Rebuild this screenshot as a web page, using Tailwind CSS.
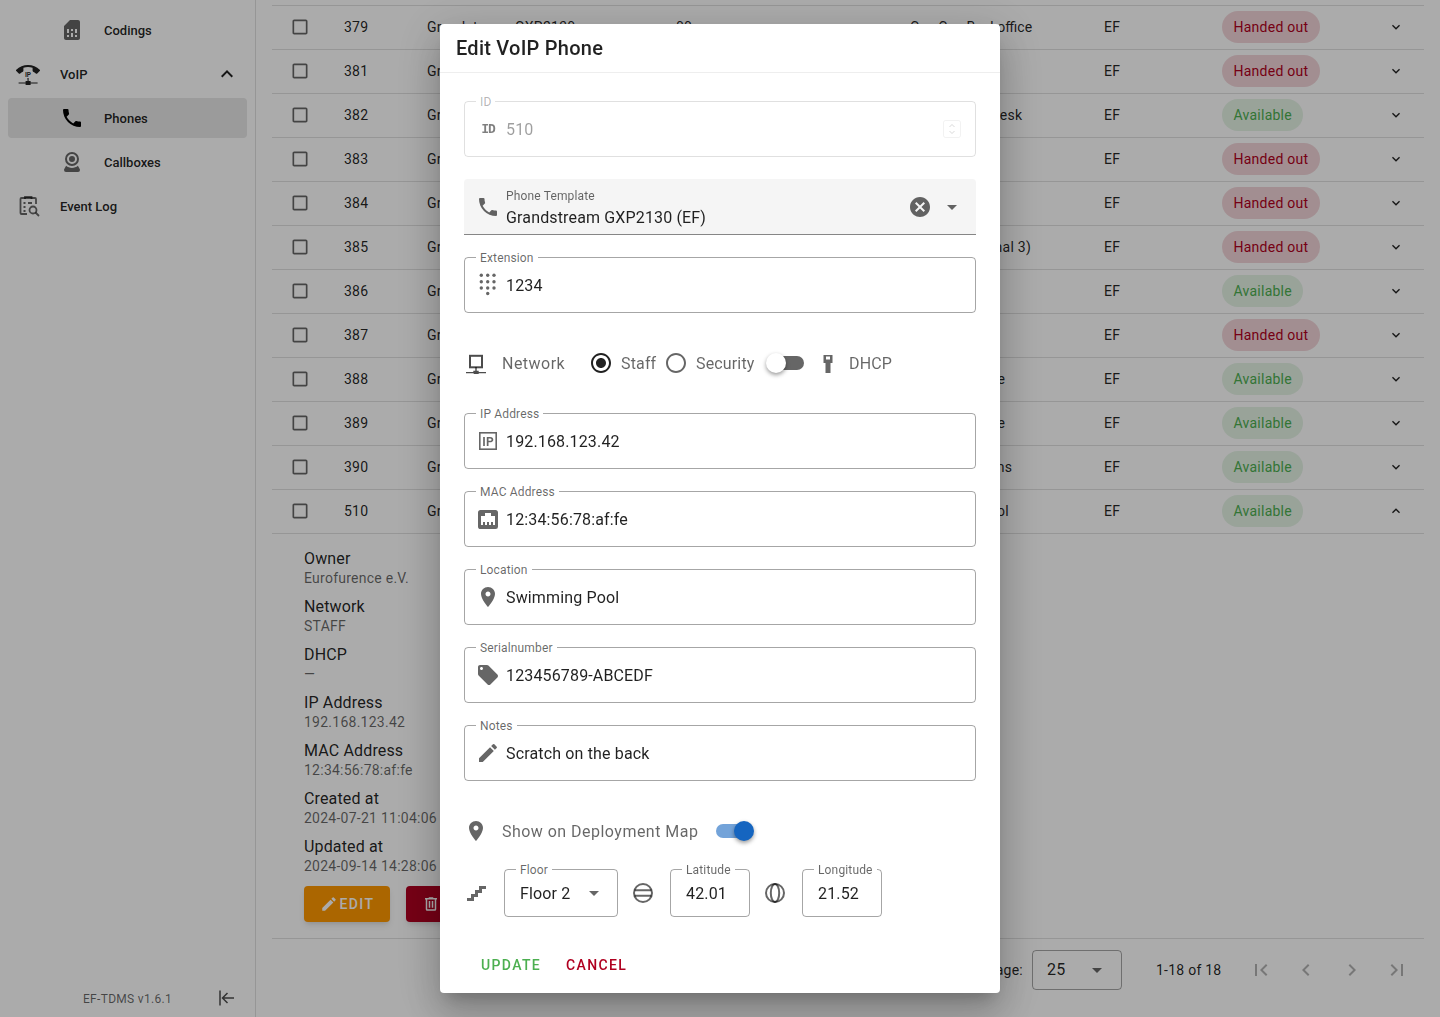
<!DOCTYPE html>
<html lang="en">
<head>
  <meta charset="UTF-8" />
  <title>EF-TDMS - Phones</title>
  <script src="https://cdn.jsdelivr.net/npm/@tailwindcss/browser@4"></script>
</head>
<body class="h-[1017px] overflow-hidden bg-white font-['Roboto',sans-serif] text-black/87">
  <div class="flex h-[1017px]">
    <!-- sidebar -->
    <aside class="w-[256px] shrink-0 border-r border-[#e0e0e0] flex flex-col justify-between text-[13px] font-medium">
      <nav class="pt-2">
        <div class="h-11 flex items-center pl-[60px]">
          <svg class="w-6 h-6 fill-black/60" viewBox="0 0 24 24"><path d="M19.99 4c0-1.1-.89-2-1.99-2h-8L4 8v12c0 1.1.9 2 2 2h12c1.1 0 2-.9 2-2l-.01-16zM9 19H7v-2h2v2zm8 0h-2v-2h2v2zm-8-4H7v-4h2v4zm4 4h-2v-4h2v4zm0-6h-2v-2h2v2zm4 2h-2v-4h2v4z"/></svg>
          <span class="ml-5 pt-[2px]">Codings</span>
        </div>
        <div class="h-11 flex items-center pl-4">
          <svg class="w-6 h-6" viewBox="0 0 24 24"><path class="fill-black/87" transform="translate(0 -4)" d="M12 9c-1.6 0-3.15.25-4.6.72v3.100c0 .39-.23.74-.56.9-.98.49-1.870 1.120-2.660 1.850-.18.18-.43.28-.7.28-.28 0-.53-.11-.71-.29L.29 13.080c-.18-.17-.29-.42-.29-.7 0-.28.11-.53.29-.71C3.340 8.780 7.460 7 12 7s8.660 1.780 11.710 4.670c.18.18.29.43.29.71 0 .28-.11.53-.29.71l-2.480 2.480c-.18.18-.43.29-.71.29-.27 0-.52-.11-.7-.28-.79-.74-1.690-1.360-2.670-1.850-.33-.16-.56-.5-.56-.9v-3.100C15.150 9.250 13.600 9 12 9z"/><text x="12" y="15.300" text-anchor="middle" font-size="6.500" font-weight="700" class="fill-black/87">IP</text><path class="fill-black/87" d="M11.400 16h1.200v3h2v1.500h7v1h-7V23h-5v-1.500h-7v-1h7V19h2z"/></svg>
          <span class="ml-5 flex-1 pt-[2px]">VoIP</span>
          <svg class="w-6 h-6 mr-4 fill-black/87" viewBox="0 0 24 24"><path d="M12 8l-6 6 1.410 1.410L12 10.830l4.590 4.580L18 14z"/></svg>
        </div>
        <div class="h-11 py-0.5 px-2">
          <div class="h-10 bg-[#e7e7e7] rounded-[4px] flex items-center pl-[52px]">
            <svg class="w-6 h-6 fill-black" viewBox="0 0 24 24"><path d="M6.620,10.790C8.060,13.620 10.380,15.940 13.210,17.380L15.410,15.180C15.690,14.900 16.080,14.820 16.430,14.930C17.550,15.300 18.750,15.500 20,15.500A1,1 0 0,1 21,16.500V20A1,1 0 0,1 20,21A17,17 0 0,1 3,4A1,1 0 0,1 4,3H7.500A1,1 0 0,1 8.500,4C8.500,5.250 8.700,6.450 9.070,7.570C9.180,7.920 9.100,8.310 8.820,8.590L6.620,10.790Z"/></svg>
            <span class="ml-5 pt-[2px]">Phones</span>
          </div>
        </div>
        <div class="h-11 flex items-center pl-[60px]">
          <svg class="w-6 h-6 fill-black/60" viewBox="0 0 24 24"><path d="M12,2A7,7 0 0,1 19,9A7,7 0 0,1 12,16A7,7 0 0,1 5,9A7,7 0 0,1 12,2M12,4A5,5 0 0,0 7,9A5,5 0 0,0 12,14A5,5 0 0,0 17,9A5,5 0 0,0 12,4M12,6A3,3 0 0,1 15,9A3,3 0 0,1 12,12A3,3 0 0,1 9,9A3,3 0 0,1 12,6M6,22A2,2 0 0,1 4,20C4,19.620 4.100,19.270 4.290,18.970L6.110,15.810C7.690,17.170 9.750,18 12,18C14.250,18 16.310,17.170 17.890,15.810L19.710,18.970C19.900,19.270 20,19.620 20,20A2,2 0 0,1 18,22H6Z"/></svg>
          <span class="ml-5 pt-[2px]">Callboxes</span>
        </div>
        <div class="h-11 flex items-center pl-[17px]">
          <svg class="w-6 h-6 fill-none stroke-black/60 stroke-[1.800]" viewBox="0 0 24 24"><path d="M10 20H4.500a1 1 0 0 1-1-1V5a1 1 0 0 1 1-1H18a1 1 0 0 1 1 1v5"/><path d="M8 5V3h6.500v2M6.500 9h2M11 9h4M6.500 13h2M6.500 17h2"/><circle cx="16" cy="16" r="3.500"/><path d="M18.500 18.500 22 22"/></svg>
          <span class="ml-[19px] pt-[2px]">Event Log</span>
        </div>
      </nav>
      <div class="h-[38px] flex items-center pl-[83px] text-xs font-normal text-black/60 tracking-[0.3px]">
        <span class="pt-[2px]">EF-TDMS v1.6.1</span>
        <svg class="w-5 h-5 ml-[45px] fill-none stroke-black/70 stroke-[1.500]" viewBox="0 0 20 20"><path d="M3 2.500v15M17 10H5.500M10.500 5l-5 5 5 5"/></svg>
      </div>
    </aside>

    <!-- table -->
    <main class="flex-1 min-w-0 px-4 pt-[5px] text-sm tracking-[0.25px]">
      <div class="border-t border-[#e0e0e0]">
        <div class="grid grid-cols-[72px_83px_88px_161px_234px_194px_118px_1fr] h-11 items-center border-b border-[#e0e0e0] pb-[1px]">
          <svg class="w-5 h-5 ml-[18px] fill-black/60" viewBox="0 0 24 24"><path d="M19 5v14H5V5h14m0-2H5c-1.100 0-2 .9-2 2v14c0 1.100.9 2 2 2h14c1.100 0 2-.9 2-2V5c0-1.100-.9-2-2-2z"/></svg>
          <span>379</span><span>Grandstream</span><span>GXP2130</span><span>00</span><span class="tracking-normal">Con Con Backoffice</span><span>EF</span>
          <div class="flex justify-between items-center pr-5"><span class="h-8 px-[11.500px] rounded-full flex items-center bg-[#b00020]/17 text-[#b00020]">Handed out</span><svg class="w-4 h-4 fill-black/87" viewBox="0 0 24 24"><path d="M16.590 8.590 12 13.170 7.410 8.590 6 10l6 6 6-6z"/></svg></div>
        </div>
        <div class="grid grid-cols-[72px_83px_88px_161px_234px_194px_118px_1fr] h-11 items-center border-b border-[#e0e0e0] pb-[1px]">
          <svg class="w-5 h-5 ml-[18px] fill-black/60" viewBox="0 0 24 24"><path d="M19 5v14H5V5h14m0-2H5c-1.100 0-2 .9-2 2v14c0 1.100.9 2 2 2h14c1.100 0 2-.9 2-2V5c0-1.100-.9-2-2-2z"/></svg>
          <span>381</span><span>Grandstream</span><span>GXP2130</span><span>00</span><span>Office</span><span>EF</span>
          <div class="flex justify-between items-center pr-5"><span class="h-8 px-[11.500px] rounded-full flex items-center bg-[#b00020]/17 text-[#b00020]">Handed out</span><svg class="w-4 h-4 fill-black/87" viewBox="0 0 24 24"><path d="M16.590 8.590 12 13.170 7.410 8.590 6 10l6 6 6-6z"/></svg></div>
        </div>
        <div class="grid grid-cols-[72px_83px_88px_161px_234px_194px_118px_1fr] h-11 items-center border-b border-[#e0e0e0] pb-[1px]">
          <svg class="w-5 h-5 ml-[18px] fill-black/60" viewBox="0 0 24 24"><path d="M19 5v14H5V5h14m0-2H5c-1.100 0-2 .9-2 2v14c0 1.100.9 2 2 2h14c1.100 0 2-.9 2-2V5c0-1.100-.9-2-2-2z"/></svg>
          <span>382</span><span>Grandstream</span><span>GXP2130</span><span>00</span><span>Registration desk</span><span>EF</span>
          <div class="flex justify-between items-center pr-5"><span class="h-8 px-[11.500px] rounded-full flex items-center bg-[#4caf50]/15 text-[#4caf50]">Available</span><svg class="w-4 h-4 fill-black/87" viewBox="0 0 24 24"><path d="M16.590 8.590 12 13.170 7.410 8.590 6 10l6 6 6-6z"/></svg></div>
        </div>
        <div class="grid grid-cols-[72px_83px_88px_161px_234px_194px_118px_1fr] h-11 items-center border-b border-[#e0e0e0] pb-[1px]">
          <svg class="w-5 h-5 ml-[18px] fill-black/60" viewBox="0 0 24 24"><path d="M19 5v14H5V5h14m0-2H5c-1.100 0-2 .9-2 2v14c0 1.100.9 2 2 2h14c1.100 0 2-.9 2-2V5c0-1.100-.9-2-2-2z"/></svg>
          <span>383</span><span>Grandstream</span><span>GXP2130</span><span>00</span><span>Office</span><span>EF</span>
          <div class="flex justify-between items-center pr-5"><span class="h-8 px-[11.500px] rounded-full flex items-center bg-[#b00020]/17 text-[#b00020]">Handed out</span><svg class="w-4 h-4 fill-black/87" viewBox="0 0 24 24"><path d="M16.590 8.590 12 13.170 7.410 8.590 6 10l6 6 6-6z"/></svg></div>
        </div>
        <div class="grid grid-cols-[72px_83px_88px_161px_234px_194px_118px_1fr] h-11 items-center border-b border-[#e0e0e0] pb-[1px]">
          <svg class="w-5 h-5 ml-[18px] fill-black/60" viewBox="0 0 24 24"><path d="M19 5v14H5V5h14m0-2H5c-1.100 0-2 .9-2 2v14c0 1.100.9 2 2 2h14c1.100 0 2-.9 2-2V5c0-1.100-.9-2-2-2z"/></svg>
          <span>384</span><span>Grandstream</span><span>GXP2130</span><span>00</span><span>Office</span><span>EF</span>
          <div class="flex justify-between items-center pr-5"><span class="h-8 px-[11.500px] rounded-full flex items-center bg-[#b00020]/17 text-[#b00020]">Handed out</span><svg class="w-4 h-4 fill-black/87" viewBox="0 0 24 24"><path d="M16.590 8.590 12 13.170 7.410 8.590 6 10l6 6 6-6z"/></svg></div>
        </div>
        <div class="grid grid-cols-[72px_83px_88px_161px_234px_194px_118px_1fr] h-11 items-center border-b border-[#e0e0e0] pb-[1px]">
          <svg class="w-5 h-5 ml-[18px] fill-black/60" viewBox="0 0 24 24"><path d="M19 5v14H5V5h14m0-2H5c-1.100 0-2 .9-2 2v14c0 1.100.9 2 2 2h14c1.100 0 2-.9 2-2V5c0-1.100-.9-2-2-2z"/></svg>
          <span>385</span><span>Grandstream</span><span>GXP2130</span><span>00</span><span>Lobby (Terminal 3)</span><span>EF</span>
          <div class="flex justify-between items-center pr-5"><span class="h-8 px-[11.500px] rounded-full flex items-center bg-[#b00020]/17 text-[#b00020]">Handed out</span><svg class="w-4 h-4 fill-black/87" viewBox="0 0 24 24"><path d="M16.590 8.590 12 13.170 7.410 8.590 6 10l6 6 6-6z"/></svg></div>
        </div>
        <div class="grid grid-cols-[72px_83px_88px_161px_234px_194px_118px_1fr] h-11 items-center border-b border-[#e0e0e0] pb-[1px]">
          <svg class="w-5 h-5 ml-[18px] fill-black/60" viewBox="0 0 24 24"><path d="M19 5v14H5V5h14m0-2H5c-1.100 0-2 .9-2 2v14c0 1.100.9 2 2 2h14c1.100 0 2-.9 2-2V5c0-1.100-.9-2-2-2z"/></svg>
          <span>386</span><span>Grandstream</span><span>GXP2130</span><span>00</span><span>Office</span><span>EF</span>
          <div class="flex justify-between items-center pr-5"><span class="h-8 px-[11.500px] rounded-full flex items-center bg-[#4caf50]/15 text-[#4caf50]">Available</span><svg class="w-4 h-4 fill-black/87" viewBox="0 0 24 24"><path d="M16.590 8.590 12 13.170 7.410 8.590 6 10l6 6 6-6z"/></svg></div>
        </div>
        <div class="grid grid-cols-[72px_83px_88px_161px_234px_194px_118px_1fr] h-11 items-center border-b border-[#e0e0e0] pb-[1px]">
          <svg class="w-5 h-5 ml-[18px] fill-black/60" viewBox="0 0 24 24"><path d="M19 5v14H5V5h14m0-2H5c-1.100 0-2 .9-2 2v14c0 1.100.9 2 2 2h14c1.100 0 2-.9 2-2V5c0-1.100-.9-2-2-2z"/></svg>
          <span>387</span><span>Grandstream</span><span>GXP2130</span><span>00</span><span>Office</span><span>EF</span>
          <div class="flex justify-between items-center pr-5"><span class="h-8 px-[11.500px] rounded-full flex items-center bg-[#b00020]/17 text-[#b00020]">Handed out</span><svg class="w-4 h-4 fill-black/87" viewBox="0 0 24 24"><path d="M16.590 8.590 12 13.170 7.410 8.590 6 10l6 6 6-6z"/></svg></div>
        </div>
        <div class="grid grid-cols-[72px_83px_88px_161px_234px_194px_118px_1fr] h-11 items-center border-b border-[#e0e0e0] pb-[1px]">
          <svg class="w-5 h-5 ml-[18px] fill-black/60" viewBox="0 0 24 24"><path d="M19 5v14H5V5h14m0-2H5c-1.100 0-2 .9-2 2v14c0 1.100.9 2 2 2h14c1.100 0 2-.9 2-2V5c0-1.100-.9-2-2-2z"/></svg>
          <span>388</span><span>Grandstream</span><span>GXP2130</span><span>00</span><span>Hotel Entrance</span><span>EF</span>
          <div class="flex justify-between items-center pr-5"><span class="h-8 px-[11.500px] rounded-full flex items-center bg-[#4caf50]/15 text-[#4caf50]">Available</span><svg class="w-4 h-4 fill-black/87" viewBox="0 0 24 24"><path d="M16.590 8.590 12 13.170 7.410 8.590 6 10l6 6 6-6z"/></svg></div>
        </div>
        <div class="grid grid-cols-[72px_83px_88px_161px_234px_194px_118px_1fr] h-11 items-center border-b border-[#e0e0e0] pb-[1px]">
          <svg class="w-5 h-5 ml-[18px] fill-black/60" viewBox="0 0 24 24"><path d="M19 5v14H5V5h14m0-2H5c-1.100 0-2 .9-2 2v14c0 1.100.9 2 2 2h14c1.100 0 2-.9 2-2V5c0-1.100-.9-2-2-2z"/></svg>
          <span>389</span><span>Grandstream</span><span>GXP2130</span><span>00</span><span>Hotel Entrance</span><span>EF</span>
          <div class="flex justify-between items-center pr-5"><span class="h-8 px-[11.500px] rounded-full flex items-center bg-[#4caf50]/15 text-[#4caf50]">Available</span><svg class="w-4 h-4 fill-black/87" viewBox="0 0 24 24"><path d="M16.590 8.590 12 13.170 7.410 8.590 6 10l6 6 6-6z"/></svg></div>
        </div>
        <div class="grid grid-cols-[72px_83px_88px_161px_234px_194px_118px_1fr] h-11 items-center border-b border-[#e0e0e0] pb-[1px]">
          <svg class="w-5 h-5 ml-[18px] fill-black/60" viewBox="0 0 24 24"><path d="M19 5v14H5V5h14m0-2H5c-1.100 0-2 .9-2 2v14c0 1.100.9 2 2 2h14c1.100 0 2-.9 2-2V5c0-1.100-.9-2-2-2z"/></svg>
          <span>390</span><span>Grandstream</span><span>GXP2130</span><span>00</span><span class="tracking-[0.45px]">Con Operations</span><span>EF</span>
          <div class="flex justify-between items-center pr-5"><span class="h-8 px-[11.500px] rounded-full flex items-center bg-[#4caf50]/15 text-[#4caf50]">Available</span><svg class="w-4 h-4 fill-black/87" viewBox="0 0 24 24"><path d="M16.590 8.590 12 13.170 7.410 8.590 6 10l6 6 6-6z"/></svg></div>
        </div>
        <div class="grid grid-cols-[72px_83px_88px_161px_234px_194px_118px_1fr] h-11 items-center border-b border-[#e0e0e0] pb-[1px]">
          <svg class="w-5 h-5 ml-[18px] fill-black/60" viewBox="0 0 24 24"><path d="M19 5v14H5V5h14m0-2H5c-1.100 0-2 .9-2 2v14c0 1.100.9 2 2 2h14c1.100 0 2-.9 2-2V5c0-1.100-.9-2-2-2z"/></svg>
          <span>510</span><span>Grandstream</span><span>GXP2130</span><span>00</span><span class="tracking-[0.1px]">Swimming Pool</span><span>EF</span>
          <div class="flex justify-between items-center pr-5"><span class="h-8 px-[11.500px] rounded-full flex items-center bg-[#4caf50]/15 text-[#4caf50]">Available</span><svg class="w-4 h-4 fill-black/87" viewBox="0 0 24 24"><path d="M12 8l-6 6 1.410 1.410L12 10.830l4.590 4.580L18 14z"/></svg></div>
        </div>
      </div>

      <!-- expanded row details -->
      <div class="pl-8 pt-3 pb-4 border-b border-[#e0e0e0]">
        <div class="flex flex-col gap-1">
          <div class="h-11"><p class="text-base leading-[26px] tracking-[0.15px]">Owner</p><p class="leading-3 text-black/60">Eurofurence e.V.</p></div>
          <div class="h-11"><p class="text-base leading-[26px] tracking-[0.15px]">Network</p><p class="leading-3 text-black/60">STAFF</p></div>
          <div class="h-11"><p class="text-base leading-[26px] tracking-[0.15px]">DHCP</p><p class="leading-3 text-black/60">—</p></div>
          <div class="h-11"><p class="text-base leading-[26px] tracking-[0.15px]">IP Address</p><p class="leading-3 text-black/60">192.168.123.42</p></div>
          <div class="h-11"><p class="text-base leading-[26px] tracking-[0.15px]">MAC Address</p><p class="leading-3 text-black/60">12:34:56:78:af:fe</p></div>
          <div class="h-11"><p class="text-base leading-[26px] tracking-[0.15px]">Created at</p><p class="leading-3 text-black/60">2024-07-21 11:04:06</p></div>
          <div class="h-11"><p class="text-base leading-[26px] tracking-[0.15px]">Updated at</p><p class="leading-3 text-black/60">2024-09-14 14:28:06</p></div>
        </div>
        <div class="flex gap-4 mt-2">
          <button class="w-[86px] h-9 rounded-[4px] bg-[#ff9800] text-white font-medium tracking-[0.1em] flex items-center justify-center gap-0.5 shadow-md">
            <svg class="w-[18px] h-[18px] fill-white" viewBox="0 0 24 24"><path d="M3 17.250V21h3.750L17.810 9.940l-3.750-3.750L3 17.250zM20.710 7.040c.39-.39.39-1.020 0-1.410l-2.340-2.340a.9959.9959 0 0 0-1.410 0l-1.830 1.830 3.750 3.750 1.830-1.830z"/></svg>
            EDIT
          </button>
          <button class="w-[110px] h-9 rounded-[4px] bg-[#b00020] text-white font-medium tracking-[0.1em] flex items-center pl-4 gap-1 shadow-md">
            <svg class="w-[18px] h-[18px] fill-white" viewBox="0 0 24 24"><path d="M9,3V4H4V6H5V19A2,2 0 0,0 7,21H17A2,2 0 0,0 19,19V6H20V4H15V3H9M7,6H17V19H7V6M9,8V17H11V8H9M13,8V17H15V8H13Z"/></svg>
            DELETE
          </button>
        </div>
      </div>

      <!-- pagination -->
      <div class="flex items-center justify-end pt-[11px]">
        <span>Rows per page:</span>
        <div class="w-[90px] h-10 ml-[9px] border border-black/35 rounded-[4px] flex items-center justify-between pl-[14px] pr-[12px] text-base">
          <span>25</span>
          <svg class="w-6 h-6 fill-black/60" viewBox="0 0 24 24"><path d="m7 10 5 5 5-5z"/></svg>
        </div>
        <span class="ml-[34px]">1-18 of 18</span>
        <div class="flex gap-[21.500px] ml-[27px] mr-[15px]">
          <svg class="w-6 h-6 fill-black/30" viewBox="0 0 24 24"><path d="M18.410 16.590 13.820 12l4.590-4.590L17 6l-6 6 6 6zM6 6h2v12H6z"/></svg>
          <svg class="w-6 h-6 fill-black/30" viewBox="0 0 24 24"><path d="M15.410 7.410 14 6l-6 6 6 6 1.410-1.410L10.830 12z"/></svg>
          <svg class="w-6 h-6 fill-black/30" viewBox="0 0 24 24"><path d="M10 6 8.590 7.410 13.170 12l-4.580 4.590L10 18l6-6z"/></svg>
          <svg class="w-6 h-6 fill-black/30" viewBox="0 0 24 24"><path d="M5.590 7.410 10.180 12l-4.590 4.590L7 18l6-6-6-6zM16 6h2v12h-2z"/></svg>
        </div>
      </div>
    </main>
  </div>

  <!-- modal -->
  <div class="fixed inset-0 bg-black/33 flex justify-center pt-6">
    <div class="w-[560px] h-[969px] bg-white rounded-[4px] shadow-[0_11px_15px_-7px_rgba(0,0,0,0.2),0_24px_38px_3px_rgba(0,0,0,0.14),0_9px_46px_8px_rgba(0,0,0,0.12)]">
      <h2 class="h-[49px] px-4 border-b border-[#eeeeee] flex items-center text-xl font-medium tracking-[0.25px]">Edit VoIP Phone</h2>
      <div class="px-6 pt-7 tracking-[0.15px]">
        <!-- ID -->
        <div class="relative h-14 border border-black/12 rounded-[4px] flex items-center px-[11px] gap-[6px] text-black/38">
          <label class="absolute left-[11px] -top-[8px] px-1 bg-white text-xs leading-4 text-black/30">ID</label>
          <span class="w-6 text-center font-['DejaVu_Sans_Mono',monospace] font-bold text-[13px] tracking-[-1px] text-black/50">ID</span>
          <span class="flex-1 pt-[2px]">510</span>
          <svg class="w-[18px] h-[18px] mr-[3px] fill-none stroke-black/15" viewBox="0 0 18 18"><rect x="0.500" y="0.500" width="17" height="17" rx="2" class="stroke-black/5"/><path d="M6.500 7 9 4.500 11.500 7M6.500 11 9 13.500 11.500 11"/></svg>
        </div>

        <!-- Phone Template -->
        <div class="mt-[22px] h-14 bg-[#f5f5f5] rounded-t-[4px] border-b border-black/45 flex items-center px-3 gap-[6px]">
          <svg class="w-6 h-6 fill-black/60" viewBox="0 0 24 24"><path d="M6.620,10.790C8.060,13.620 10.380,15.940 13.210,17.380L15.410,15.180C15.690,14.900 16.080,14.820 16.430,14.930C17.550,15.300 18.750,15.500 20,15.500A1,1 0 0,1 21,16.500V20A1,1 0 0,1 20,21A17,17 0 0,1 3,4A1,1 0 0,1 4,3H7.500A1,1 0 0,1 8.500,4C8.500,5.250 8.700,6.450 9.070,7.570C9.180,7.920 9.100,8.310 8.820,8.590L6.620,10.790Z"/></svg>
          <div class="flex-1 pt-[5px]">
            <p class="text-xs leading-4 text-black/60">Phone Template</p>
            <p class="text-base leading-6 mt-[2px]">Grandstream GXP2130 (EF)</p>
          </div>
          <svg class="w-6 h-6 fill-black/60 mr-[2px]" viewBox="0 0 24 24"><path d="M12 2C6.470 2 2 6.470 2 12s4.470 10 10 10 10-4.470 10-10S17.530 2 12 2zm5 13.590L15.590 17 12 13.410 8.410 17 7 15.590 10.590 12 7 8.410 8.410 7 12 10.590 15.590 7 17 8.410 13.410 12 17 15.590z"/></svg>
          <svg class="w-6 h-6 fill-black/60" viewBox="0 0 24 24"><path d="m7 10 5 5 5-5z"/></svg>
        </div>

        <!-- Extension -->
        <div class="relative mt-[22px] h-14 border border-black/35 rounded-[4px] flex items-center px-[11px] gap-[6px]">
          <label class="absolute left-[11px] -top-[8px] px-1 bg-white text-xs leading-4 text-black/60">Extension</label>
          <svg class="w-6 h-6 fill-black/60" viewBox="0 0 24 24"><circle cx="5.300" cy="2.300" r="1.700"/><circle cx="11.700" cy="2.300" r="1.700"/><circle cx="18" cy="2.300" r="1.700"/><circle cx="5.300" cy="8.700" r="1.700"/><circle cx="11.700" cy="8.700" r="1.700"/><circle cx="18" cy="8.700" r="1.700"/><circle cx="5.300" cy="15" r="1.700"/><circle cx="11.700" cy="15" r="1.700"/><circle cx="18" cy="15" r="1.700"/><circle cx="11.700" cy="20.500" r="1.700"/></svg>
          <span class="pt-[2px]">1234</span>
        </div>

        <!-- Network -->
        <div class="mt-[22px] h-14 flex items-center text-black/60">
          <svg class="w-6 h-6" viewBox="0 0 24 24"><rect x="6" y="4.800" width="12" height="11.500" class="fill-none stroke-black/70 stroke-2"/><path class="fill-black/70" d="M11.300 16h1.400v3.800h2v1.200h7.300v1.200h-7.300v.8h-5v-.8H2v-1.200h7.300v-1.200h2z"/></svg>
          <span class="ml-[14px] w-[62px] tracking-[0.03em] pt-[2px]">Network</span>
          <svg class="w-6 h-6 ml-[25px] fill-black/87" viewBox="0 0 24 24"><path d="M12 7c-2.760 0-5 2.240-5 5s2.240 5 5 5 5-2.240 5-5-2.240-5-5-5zm0-5C6.480 2 2 6.480 2 12s4.480 10 10 10 10-4.480 10-10S17.520 2 12 2zm0 18c-4.420 0-8-3.580-8-8s3.580-8 8-8 8 3.580 8 8-3.580 8-8 8z"/></svg>
          <span class="ml-2 w-[35px] pt-[2px]">Staff</span>
          <svg class="w-6 h-6 ml-2 fill-black/60" viewBox="0 0 24 24"><path d="M12 2C6.480 2 2 6.480 2 12s4.480 10 10 10 10-4.480 10-10S17.520 2 12 2zm0 18c-4.420 0-8-3.580-8-8s3.580-8 8-8 8 3.580 8 8-3.580 8-8 8z"/></svg>
          <span class="ml-2 w-[59px] pt-[2px]">Security</span>
          <div class="relative ml-[11px] w-[38px] h-5">
            <div class="absolute left-[2px] right-0 top-[3px] h-[14px] rounded-full bg-black/60"></div>
            <div class="absolute left-0 top-0 w-5 h-5 rounded-full bg-white shadow-[0_2px_4px_rgba(0,0,0,0.4)]"></div>
          </div>
          <svg class="w-6 h-6 ml-3 fill-black/60" viewBox="0 0 24 24"><path d="M7.500 4h9v8h-2v10h-5V12h-2zM10 5.500v3h4v-3z" fill-rule="evenodd"/></svg>
          <span class="ml-[9px] pt-[2px]">DHCP</span>
        </div>

        <!-- IP Address -->
        <div class="relative mt-[22px] h-14 border border-black/35 rounded-[4px] flex items-center px-[11px] gap-[6px]">
          <label class="absolute left-[11px] -top-[8px] px-1 bg-white text-xs leading-4 text-black/60">IP Address</label>
          <svg class="w-6 h-6" viewBox="0 0 24 24"><rect x="3.800" y="3.800" width="16.400" height="16.400" class="fill-none stroke-black/60 stroke-[1.600]"/><text x="12" y="16.500" text-anchor="middle" font-size="12" font-weight="700" class="fill-black/60">IP</text></svg>
          <span class="pt-[2px]">192.168.123.42</span>
        </div>

        <!-- MAC Address -->
        <div class="relative mt-[22px] h-14 border border-black/35 rounded-[4px] flex items-center px-[11px] gap-[6px]">
          <label class="absolute left-[11px] -top-[8px] px-1 bg-white text-xs leading-4 text-black/60">MAC Address</label>
          <svg class="w-6 h-6 fill-black/60" viewBox="0 0 24 24"><path d="M7,15H9V18H11V15H13V18H15V15H17V18H19V9H15V6H9V9H5V18H7V15M4.380,3H19.630C20.940,3 22,4.060 22,5.380V19.630A2.370,2.370 0 0,1 19.630,22H4.380C3.060,22 2,20.940 2,19.630V5.380C2,4.060 3.060,3 4.380,3Z"/></svg>
          <span class="pt-[2px]">12:34:56:78:af:fe</span>
        </div>

        <!-- Location -->
        <div class="relative mt-[22px] h-14 border border-black/35 rounded-[4px] flex items-center px-[11px] gap-[6px]">
          <label class="absolute left-[11px] -top-[8px] px-1 bg-white text-xs leading-4 text-black/60">Location</label>
          <svg class="w-6 h-6 fill-black/60" viewBox="0 0 24 24"><path d="M12 2C8.130 2 5 5.130 5 9c0 5.250 7 13 7 13s7-7.750 7-13c0-3.870-3.130-7-7-7zm0 9.500c-1.380 0-2.500-1.120-2.500-2.500s1.120-2.500 2.500-2.500 2.500 1.120 2.500 2.500-1.120 2.500-2.500 2.500z"/></svg>
          <span class="pt-[2px]">Swimming Pool</span>
        </div>

        <!-- Serialnumber -->
        <div class="relative mt-[22px] h-14 border border-black/35 rounded-[4px] flex items-center px-[11px] gap-[6px]">
          <label class="absolute left-[11px] -top-[8px] px-1 bg-white text-xs leading-4 text-black/60">Serialnumber</label>
          <svg class="w-6 h-6 fill-black/60" viewBox="0 0 24 24"><path d="M21.410 11.580l-9-9C12.050 2.220 11.550 2 11 2H4c-1.100 0-2 .9-2 2v7c0 .55.22 1.050.59 1.420l9 9c.36.36.86.58 1.410.58.55 0 1.050-.22 1.410-.59l7-7c.37-.36.59-.86.59-1.410 0-.55-.23-1.060-.59-1.420zM5.500 7C4.670 7 4 6.330 4 5.500S4.670 4 5.500 4 7 4.670 7 5.500 6.330 7 5.500 7z"/></svg>
          <span class="pt-[2px]">123456789-ABCEDF</span>
        </div>

        <!-- Notes -->
        <div class="relative mt-[22px] h-14 border border-black/35 rounded-[4px] flex items-center px-[11px] gap-[6px]">
          <label class="absolute left-[11px] -top-[8px] px-1 bg-white text-xs leading-4 text-black/60">Notes</label>
          <svg class="w-6 h-6 fill-black/60" viewBox="0 0 24 24"><path d="M3 17.250V21h3.750L17.810 9.940l-3.750-3.750L3 17.250zM20.710 7.040c.39-.39.39-1.020 0-1.410l-2.340-2.340a.9959.9959 0 0 0-1.410 0l-1.830 1.830 3.750 3.750 1.830-1.830z"/></svg>
          <span class="pt-[2px]">Scratch on the back</span>
        </div>

        <!-- Deployment map -->
        <div class="mt-[22px] h-14 flex items-center text-black/60">
          <svg class="w-6 h-6 fill-black/60" viewBox="0 0 24 24"><path d="M12 2C8.130 2 5 5.130 5 9c0 5.250 7 13 7 13s7-7.750 7-13c0-3.870-3.130-7-7-7zm0 9.500c-1.380 0-2.500-1.120-2.500-2.500s1.120-2.500 2.500-2.500 2.500 1.120 2.500 2.500-1.120 2.500-2.500 2.500z"/></svg>
          <span class="ml-[14px] w-[197px] whitespace-nowrap tracking-[0.47px] pt-[2px]">Show on Deployment Map</span>
          <div class="relative ml-[17px] w-[38px] h-5">
            <div class="absolute left-0 right-[2px] top-[3px] h-[14px] rounded-full bg-[#1565c0]/60"></div>
            <div class="absolute right-0 top-0 w-5 h-5 rounded-full bg-[#1565c0] shadow-[0_2px_4px_rgba(0,0,0,0.4)]"></div>
          </div>
        </div>

        <!-- Floor / coordinates -->
        <div class="mt-[10px] h-12 flex items-center">
          <svg class="w-6 h-6 fill-black/60" viewBox="0 0 24 24"><path d="M15,5V9H11V13H7V17H3V20H10V16H14V12H18V8H22V5H15Z"/></svg>
          <div class="relative ml-4 w-[114px] h-12 border border-black/35 rounded-[4px] flex items-center justify-between pl-[15px] pr-[11px]">
            <label class="absolute left-[11px] -top-[8px] px-1 bg-white text-xs leading-4 text-black/60">Floor</label>
            <span class="pt-[2px]">Floor 2</span>
            <svg class="w-6 h-6 fill-black/60" viewBox="0 0 24 24"><path d="m7 10 5 5 5-5z"/></svg>
          </div>
          <svg class="w-6 h-6 ml-[13px] fill-none stroke-black/60 stroke-2" viewBox="0 0 24 24"><circle cx="12" cy="12" r="9"/><path d="M3.500 9.200h17M3.500 14.800h17"/></svg>
          <div class="relative ml-[15px] w-20 h-12 border border-black/35 rounded-[4px] flex items-center pl-[15px]">
            <label class="absolute left-[11px] -top-[8px] px-1 bg-white text-xs leading-4 text-black/60">Latitude</label>
            <span class="pt-[2px]">42.01</span>
          </div>
          <svg class="w-6 h-6 ml-[13px] fill-none stroke-black/60 stroke-2" viewBox="0 0 24 24"><circle cx="12" cy="12" r="9"/><ellipse cx="12" cy="12" rx="4.200" ry="9"/></svg>
          <div class="relative ml-[15px] w-20 h-12 border border-black/35 rounded-[4px] flex items-center pl-[15px]">
            <label class="absolute left-[11px] -top-[8px] px-1 bg-white text-xs leading-4 text-black/60">Longitude</label>
            <span class="pt-[2px]">21.52</span>
          </div>
        </div>
      </div>

      <!-- actions -->
      <div class="mt-7 h-10 flex items-center pl-[41px] text-sm font-medium tracking-[1.350px]">
        <button class="text-[#4caf50]">UPDATE</button>
        <button class="ml-[25px] text-[#b00020]">CANCEL</button>
      </div>
    </div>
  </div>
</body>
</html>
